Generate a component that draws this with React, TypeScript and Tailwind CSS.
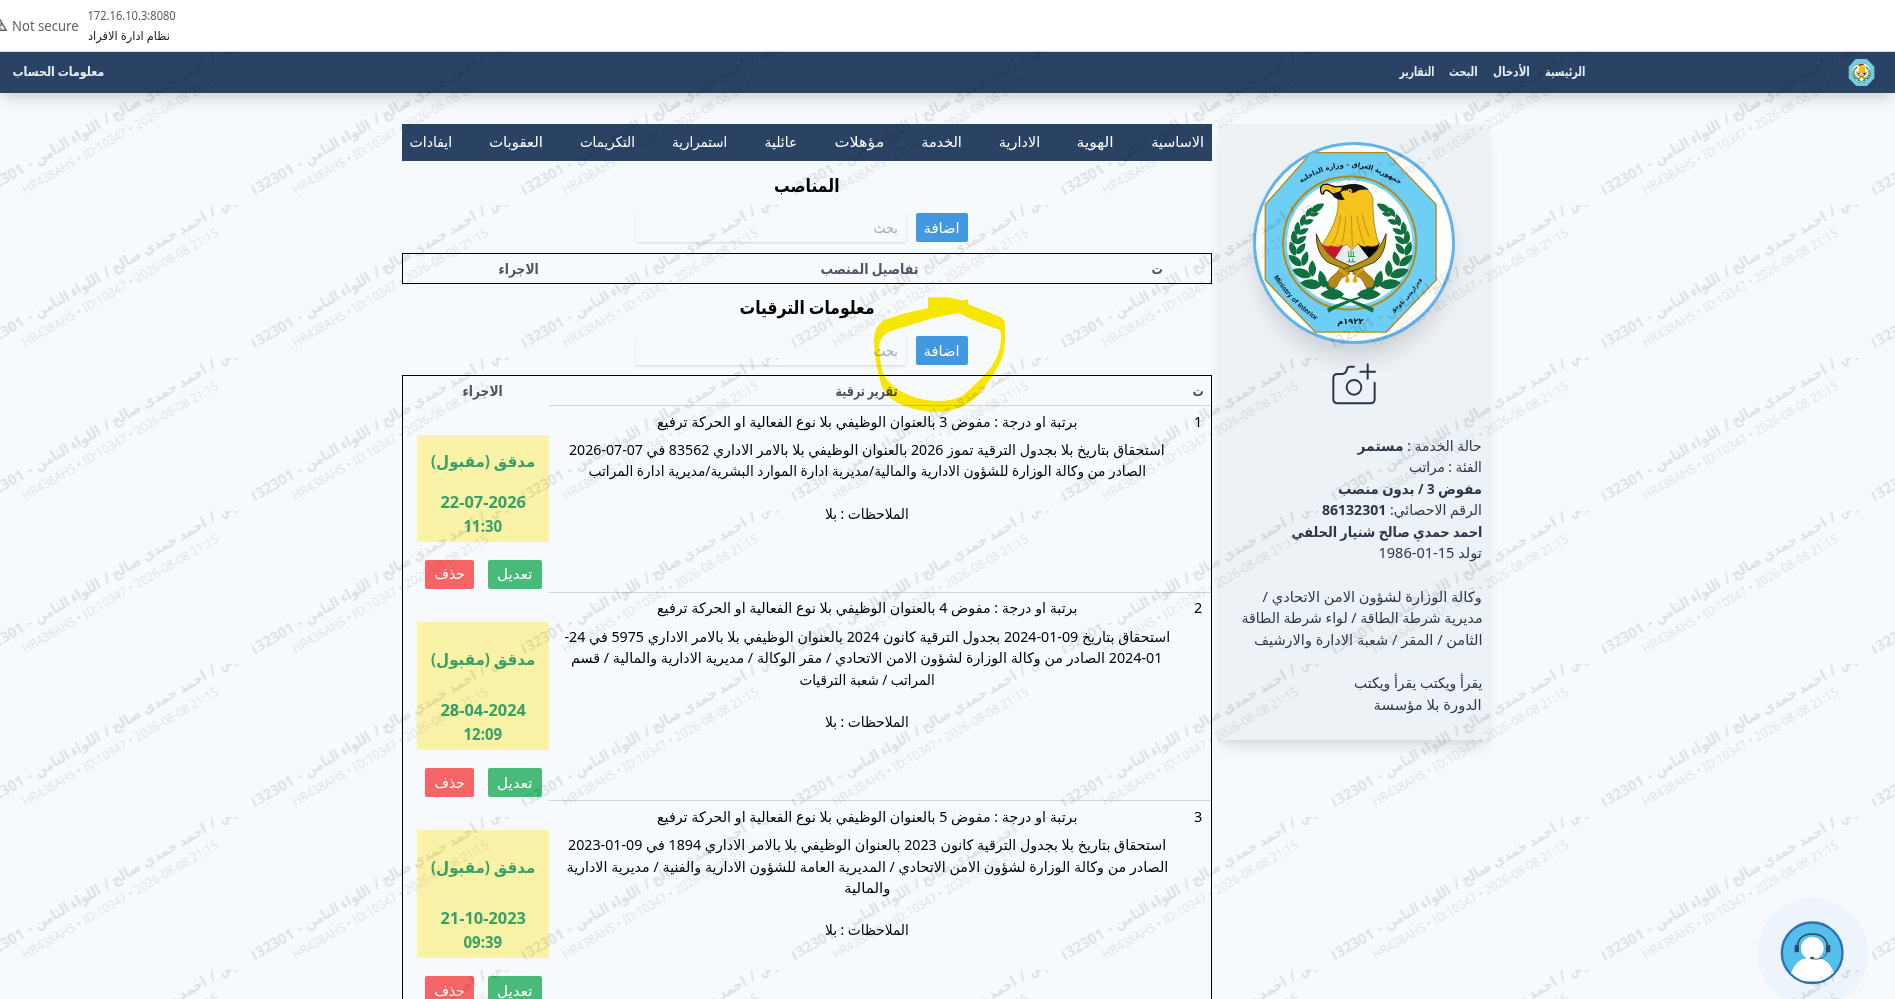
import { useLayoutEffect, useRef, useState, type ReactNode } from "react";

interface FitProps {
  w: number;
  className?: string;
  children: ReactNode;
}

// Single line of text squeezed or stretched to a given width
const Fit = ({ w, className = "", children }: FitProps) => {
  const ref = useRef<HTMLSpanElement>(null);
  const [scale, setScale] = useState(1);

  useLayoutEffect(() => {
    if (ref.current) setScale(w / ref.current.offsetWidth);
  }, [w]);

  return (
    <span className={`flex shrink-0 justify-center ${className}`} style={{ width: w }}>
      <span ref={ref} className="shrink-0 origin-center whitespace-nowrap" style={{ transform: `scaleX(${scale})` }}>
        {children}
      </span>
    </span>
  );
};

const navLinks = [
  { label: "الرئيسية", w: 40 },
  { label: "الأدخال", w: 37 },
  { label: "البحث", w: 29 },
  { label: "التقارير", w: 35 },
];

const tabs = [
  { label: "الاساسية", w: 53 },
  { label: "الهوية", w: 37 },
  { label: "الادارية", w: 41 },
  { label: "الخدمة", w: 41 },
  { label: "مؤهلات", w: 50 },
  { label: "عائلية", w: 33 },
  { label: "استمرارية", w: 55 },
  { label: "التكريمات", w: 55 },
  { label: "العقوبات", w: 54 },
  { label: "ايفادات", w: 43 },
];

const promotions = [
  {
    title: "برتبة او درجة : مفوض 3 بالعنوان الوظيفي بلا نوع الفعالية او الحركة ترفيع",
    lines: [
      { text: "استحقاق بتاريخ بلا بجدول الترقية تموز 2026 بالعنوان الوظيفي بلا بالامر الاداري 83562 في 07-07-2026", w: 596 },
      { text: "الصادر من وكالة الوزارة للشؤون الادارية والمالية/مديرية ادارة الموارد البشرية/مديرية ادارة المراتب", w: 558 },
    ],
    date: "22-07-2026",
    time: "11:30",
  },
  {
    title: "برتبة او درجة : مفوض 4 بالعنوان الوظيفي بلا نوع الفعالية او الحركة ترفيع",
    lines: [
      { text: "استحقاق بتاريخ 09-01-2024 بجدول الترقية كانون 2024 بالعنوان الوظيفي بلا بالامر الاداري 5975 في 24-", w: 606 },
      { text: "2024-01 الصادر من وكالة الوزارة لشؤون الامن الاتحادي / مقر الوكالة / مديرية الادارية والمالية / قسم", w: 591 },
      { text: "المراتب / شعبة الترقيات", w: 135 },
    ],
    date: "28-04-2024",
    time: "12:09",
  },
  {
    title: "برتبة او درجة : مفوض 5 بالعنوان الوظيفي بلا نوع الفعالية او الحركة ترفيع",
    lines: [
      { text: "استحقاق بتاريخ بلا بجدول الترقية كانون 2023 بالعنوان الوظيفي بلا بالامر الاداري 1894 في 09-01-2023", w: 598 },
      { text: "الصادر من وكالة الوزارة لشؤون الامن الاتحادي / المديرية العامة للشؤون الادارية والفنية / مديرية الادارية", w: 602 },
      { text: "والمالية", w: 46 },
    ],
    date: "21-10-2023",
    time: "09:39",
  },
];

// Left half of the wreath: x, y, angle, half length
const leaves = [
  [352, 292, -30, 23],
  [326, 306, -60, 17],
  [342, 312, -12, 15],
  [308, 330, -75, 19],
  [324, 335, -20, 17],
  [291, 354, -85, 20],
  [309, 364, -28, 18],
  [281, 382, -95, 21],
  [302, 390, -35, 20],
  [277, 416, -110, 23],
  [302, 416, -52, 21],
  [284, 452, -140, 26],
  [314, 446, -75, 23],
  [304, 490, -160, 30],
  [336, 476, -90, 25],
  [332, 523, -172, 33],
  [366, 508, -105, 27],
  [396, 554, 180, 36],
  [388, 530, -135, 24],
];

const Wreath = () => (
  <g fill="#10703f">
    {leaves.map(([x, y, r, s], i) => (
      <path key={i} d="M-1 0C-.5 -.65 .4 -.55 1 0C.4 .55 -.5 .65 -1 0Z" transform={`translate(${x} ${y}) rotate(${r}) scale(${s})`} />
    ))}
    <path d="M372 552Q430 556 522 596L519 610Q460 574 372 552Z" />
  </g>
);

const Sword = () => (
  <g>
    <path d="M348 371Q347 430 382 457Q425 477 486 494L494 484Q430 462 398 443Q366 418 348 371Z" fill="#b8901f" stroke="#4d3c0c" strokeWidth="3" />
    <path d="M464 474Q495 484 506 496Q526 510 522 526Q513 540 498 532Q492 518 482 505L458 492Z" fill="#b58a1c" stroke="#7a5c10" strokeWidth="2" />
    <path d="M488 478Q462 494 465 514" fill="none" stroke="#d99f18" strokeWidth="8" strokeLinecap="round" />
    <circle cx="486" cy="480" r="6" fill="#e0a81c" />
    <circle cx="465" cy="512" r="7" fill="#e0a81c" />
  </g>
);

const Emblem = ({ small = false }: { small?: boolean }) => (
  <svg viewBox={small ? "178 124 546 546" : "166 103 592 592"} className="block h-full w-full" fontFamily='"DejaVu Sans", sans-serif'>
    <path d="M333 126H560L710 283V511L560 668H345L194 511V283Z" fill="#6dcff6" stroke="#b88a14" strokeWidth="4" />
    <circle cx="449" cy="399" r="194" fill="#fdfefe" stroke="#72d4f8" strokeWidth="9" />
    <circle cx="449" cy="399" r="201" fill="none" stroke="#b88a14" strokeWidth="6" />
    <Wreath />
    <g transform="translate(903 0) scale(-1 1)">
      <Wreath />
    </g>
    <path d="M372 402L414 410L434 400L405 446Q385 435 366 405Z" fill="#c8142c" />
    <path d="M405 446L432 408L480 408L508 446Q452 480 405 446Z" fill="#e9e9ea" />
    <path d="M474 402L540 398Q534 428 508 446Z" fill="#050505" />
    <path d="M446 440V424M453 439V420M460 438V424M444 440H466M442 456H468M448 456V446M458 456V446" stroke="#189c52" strokeWidth="3" />
    <path
      d="M413 254C418 300 408 338 367 403Q376 413 393 407Q407 414 419 404Q430 412 441 403L456 419L474 401Q490 415 503 407Q520 414 538 402C526 370 519 330 519 267C513 232 480 224 446 224L400 232Q372 222 362 231Q369 245 392 238Q408 240 413 254Z"
      fill="#f5c31c"
      stroke="#856311"
      strokeWidth="2"
    />
    <path d="M421 315Q416 370 397 402M437 320Q434 370 425 400M454 315Q456 375 457 410M471 318Q482 378 493 403M486 310Q495 350 508 380" fill="none" stroke="#a37b10" strokeWidth="2" />
    <path d="M425 229C445 217 485 216 507 238C491 237 474 238 466 246Q452 252 440 240L421 243Q425 258 434 268C414 272 400 264 395 249L398 236Z" fill="#171410" />
    <path d="M364 250C357 232 362 221 380 221L405 229L428 228L424 243L398 252Q384 238 376 240Q370 242 370 251Z" fill="#f5c31c" stroke="#171410" strokeWidth="4" />
    <circle cx="449" cy="242" r="7" fill="#f5c31c" />
    <circle cx="449" cy="242" r="2.5" fill="#171410" />
    <Sword />
    <g transform="translate(907 0) scale(-1 1)">
      <Sword />
    </g>
    {!small && (
      <g fill="#0b1720">
        <path id="arc-top" d="M299 220Q449 116 604 224" fill="none" />
        <path id="arc-left" d="M219 500Q262 574 348 634" fill="none" />
        <path id="arc-right" d="M570 616Q640 566 672 496" fill="none" />
        <text fontSize="20.5" fontWeight="bold" direction="rtl" textAnchor="middle">
          <textPath href="#arc-top" startOffset="50%">جمهورية العراق - وزارة الداخلية</textPath>
        </text>
        <text fontSize="21" fontWeight="bold" direction="ltr" textAnchor="middle" fontFamily='"Liberation Sans", sans-serif'>
          <textPath href="#arc-left" startOffset="50%">Ministry of Interior</textPath>
        </text>
        <text fontSize="17" fontWeight="bold" direction="rtl" textAnchor="middle">
          <textPath href="#arc-right" startOffset="50%">وەزارەتی ناوخۆ</textPath>
        </text>
        <text x="451" y="645" fontSize="25" fontWeight="bold" textAnchor="middle" direction="rtl">
          ١٩٢٢م
        </text>
      </g>
    )}
  </svg>
);

const CameraPlus = () => (
  <svg viewBox="396 759 132 126" className="h-[42px] w-[44px]" fill="none" stroke="#2d3748" strokeWidth="6" strokeLinecap="round" strokeLinejoin="round">
    <path d="M462 770H449Q442 770 441 777Q438 792 425 792H413Q400 792 400 805V867Q400 880 413 880H511Q524 880 524 867V818" />
    <circle cx="462" cy="832" r="22" />
    <path d="M503 763V806M481 785H525" />
  </svg>
);

const SupportAvatar = () => (
  <svg viewBox="112 50 336 336" className="h-[112px] w-[112px]">
    <circle cx="280" cy="218" r="166" fill="#edf4fb" />
    <clipPath id="avatar-clip">
      <circle cx="277.5" cy="217.5" r="88" />
    </clipPath>
    <circle cx="277.5" cy="217.5" r="91" fill="#55bfec" stroke="#2f6fb7" strokeWidth="7" />
    <g clipPath="url(#avatar-clip)">
      <path d="M212 285Q228 236 262 234H294Q328 236 346 285L340 303H216Z" fill="#fff" />
    </g>
    <ellipse cx="278" cy="204" rx="34" ry="34" fill="#fff" />
    <path d="M233 200Q236 161 278 161Q320 161 324 200" fill="none" stroke="#34495e" strokeWidth="5" />
    <path d="M323 214Q316 240 280 236" fill="none" stroke="#34495e" strokeWidth="2.5" />
    <rect x="225" y="194" width="13" height="22" rx="2" fill="#34495e" />
    <rect x="319" y="194" width="13" height="22" rx="2" fill="#34495e" />
    <ellipse cx="277" cy="233" rx="6" ry="4" fill="#34495e" />
  </svg>
);

const markWords = [
  { text: "مفوض", x: 144, w: 36 },
  { text: "/", x: 118, w: 6 },
  { text: "احمد حمدي صالح", x: 56, w: 108 },
  { text: "/", x: -4, w: 6 },
  { text: "اللواء الثامن", x: -49.5, w: 74 },
  { text: "-", x: -93, w: 5 },
  { text: "86132301", x: -134, w: 67 },
];

const Watermark = () => (
  <svg className="pointer-events-none absolute inset-x-0 top-[52px] h-[947px] w-full">
    <pattern id="mark" x="251.7" y="0" width="270" height="153" patternUnits="userSpaceOnUse">
      <g transform="translate(135 76.5) rotate(-30)" fill="#000" fillOpacity="0.1" textAnchor="middle">
        {markWords.map((word) => (
          <text
            key={word.x}
            x={word.x}
            y="-8"
            direction="rtl"
            fontSize="14.8"
            fontWeight="bold"
            fontFamily='"Noto Sans", "DejaVu Sans", sans-serif'
            textLength={word.w}
            lengthAdjust="spacingAndGlyphs"
          >
            {word.text}
          </text>
        ))}
        <text y="11.5" direction="ltr" fontSize="12.6" fontFamily='"Noto Sans", sans-serif' textLength="224" lengthAdjust="spacingAndGlyphs">
          HR438AHS • ID:10347 • 2026-08-08 21:15
        </text>
      </g>
    </pattern>
    <rect width="100%" height="100%" fill="url(#mark)" />
  </svg>
);

// Freehand marker loop around the second add button
const MarkerLoop = () => (
  <svg viewBox="216 555 405 356" className="pointer-events-none absolute left-[872px] top-[295px] h-[119px] w-[135px] mix-blend-multiply">
    <path
      fillRule="evenodd"
      fill="#ffec00"
      d="M384 561H440Q470 565 486 571L504 567V582Q560 603 595 618Q613 622 615 645Q617 690 612 725Q603 765 565 815Q535 862 500 882Q435 916 360 900Q315 892 280 870Q245 845 239 805Q225 760 222 690Q222 650 250 631Q300 610 384 594Z
      M477 609Q440 614 395 625Q330 645 280 660Q245 672 238 700Q236 740 248 785Q258 815 300 842Q350 870 400 872Q455 875 490 855Q540 812 570 775Q600 735 603 690Q605 660 595 657Q560 646 515 627Z"
    />
  </svg>
);

const SearchRow = () => (
  <div className="flex h-[29px] justify-center gap-2.5 pr-[10px]">
    <div className="flex w-[52px] items-center justify-center rounded-[2px] bg-[#4299e1] text-[14.4px] text-white">
      <Fit w={36}>اضافة</Fit>
    </div>
    <div className="flex w-[270px] items-center rounded-[2px] bg-[#f7fafc] px-2 text-[14.4px] text-[#a0aec0] shadow-[0_1px_3px_0_rgba(0,0,0,0.1),0_1px_2px_0_rgba(0,0,0,0.06)]">
      <Fit w={24}>بحث</Fit>
    </div>
  </div>
);

const App = () => {
  return (
    <div
      dir="rtl"
      className="relative h-[999px] w-full overflow-hidden bg-[#f7fafc] text-[14.4px] leading-[21.6px] text-black [font-family:'Noto_Sans','DejaVu_Sans',sans-serif]"
    >
      {/* Browser bar */}
      <div dir="ltr" className="flex h-[52px] border-b border-[#d5d8dc] bg-white">
        <svg viewBox="0 0 8 14" className="mt-[19px] h-[14px] w-[8px] shrink-0" fill="none" stroke="#5f6368" strokeWidth="1.4">
          <path d="M-6 11.3H6.2L0 0.5M1 4V7.5M1 8.8V10" />
        </svg>
        <div className="ml-[4px] mt-[16px] text-[13.5px] text-[#5f6368]">
          <Fit w={67}>Not secure</Fit>
        </div>
        <div className="ml-[9px] mt-[6px] text-[12px] leading-[20px]">
          <Fit w={88} className="text-[#5a5d61]">172.16.10.3:8080</Fit>
          <Fit w={82} className="text-[#202124]">نظام ادارة الافراد</Fit>
        </div>
      </div>

      {/* Main nav */}
      <nav className="relative flex h-[41px] items-start bg-[#2a4365] text-[12.6px] font-bold text-[#e6edf5] shadow-[0_10px_15px_-3px_rgba(0,0,0,0.12),0_4px_6px_-2px_rgba(0,0,0,0.06)]">
        <div className="mr-[20px] mt-[7px] h-[27px] w-[27px]">
          <Emblem small />
        </div>
        <div className="mr-[263px] mt-[9px] flex gap-[15px]">
          {navLinks.map((link) => (
            <Fit key={link.label} w={link.w}>{link.label}</Fit>
          ))}
        </div>
        <div className="ml-[12px] mr-auto mt-[9px]">
          <Fit w={92}>معلومات الحساب</Fit>
        </div>
      </nav>

      <div className="mr-[406px] mt-[31px] flex items-start gap-[7px]">
        {/* Profile card */}
        <aside className="flex h-[616px] w-[270px] flex-col rounded-[4px] bg-[#edf2f7] shadow-[0_10px_15px_-3px_rgba(0,0,0,0.1),0_4px_6px_-2px_rgba(0,0,0,0.05)]">
          <div className="mt-[18px] h-[202px] w-[202px] self-center overflow-hidden rounded-full border-[3px] border-[#63b3ed] bg-white shadow-[0_18px_22px_-5px_rgba(0,0,0,0.14)]">
            <Emblem />
          </div>
          <div className="mt-[19px] self-center">
            <CameraPlus />
          </div>
          <div className="mt-[29.5px] px-[7px] text-[#2d3748]">
            <Fit w={124}>
              حالة الخدمة : <b>مستمر</b>
            </Fit>
            <Fit w={73}>الفئة : مراتب</Fit>
            <Fit w={144} className="font-bold">مفوض 3 / بدون منصب</Fit>
            <Fit w={160}>
              الرقم الاحصائي: <b>86132301</b>
            </Fit>
            <Fit w={191} className="font-bold">احمد حمدي صالح شنيار الحلفي</Fit>
            <Fit w={103}>تولد 15-01-1986</Fit>
            <div className="mt-[21.6px]">
              <Fit w={219}>وكالة الوزارة لشؤون الامن الاتحادي /</Fit>
              <Fit w={241}>مديرية شرطة الطاقة / لواء شرطة الطاقة</Fit>
              <Fit w={228}>الثامن / المقر / شعبة الادارة والارشيف</Fit>
            </div>
            <div className="mt-[21.6px]">
              <Fit w={128}>يقرأ ويكتب يقرأ ويكتب</Fit>
              <Fit w={108}>الدورة بلا مؤسسة</Fit>
            </div>
          </div>
        </aside>

        <main className="flex w-[810px] flex-col">
          <div className="flex h-[37px] items-center justify-between bg-[#2a4365] pb-px pl-[7px] pr-[8px] text-white">
            {tabs.map((tab) => (
              <Fit key={tab.label} w={tab.w}>{tab.label}</Fit>
            ))}
          </div>

          {/* Positions */}
          <h2 className="mt-[11px] flex h-[28px] items-center justify-center text-[18px] font-bold">
            <Fit w={66}>المناصب</Fit>
          </h2>
          <div className="mt-[13px]">
            <SearchRow />
          </div>
          <div className="mt-[11px] flex h-[31px] items-center border border-black font-semibold text-[#4a5568]">
            <div className="flex w-[108px] justify-center">
              <Fit w={11}>ت</Fit>
            </div>
            <div className="flex w-[468px] justify-center">
              <Fit w={98}>تفاصيل المنصب</Fit>
            </div>
            <div className="flex flex-1 justify-center">
              <Fit w={40}>الاجراء</Fit>
            </div>
          </div>

          {/* Promotions */}
          <h2 className="mt-[10px] flex h-[28px] items-center justify-center text-[18px] font-bold">
            <Fit w={135}>معلومات الترقيات</Fit>
          </h2>
          <div className="mt-[14px]">
            <SearchRow />
          </div>
          <div className="mt-[10px] h-[700px] border border-black">
            <div className="flex h-[29px] items-center font-semibold text-[#4a5568]">
              <div className="flex w-[26px] justify-center">
                <Fit w={11}>ت</Fit>
              </div>
              <div className="flex w-[636px] justify-center">
                <Fit w={62}>تقرير ترقية</Fit>
              </div>
              <div className="flex w-[132px] justify-center">
                <Fit w={40}>الاجراء</Fit>
              </div>
            </div>
            {promotions.map((p, i) => (
              <div key={p.date} className="flex">
                <div className="flex w-[662px] border-t border-[#cbd5e0] pt-[4.5px]">
                  <div className="w-[26px] text-center">{i + 1}</div>
                  <div className="flex w-[636px] flex-col items-center pb-[67.5px]">
                    <Fit w={420}>{p.title}</Fit>
                    <div className="mt-[6.8px] flex flex-col items-center">
                      {p.lines.map((line) => (
                        <Fit key={line.text} w={line.w}>{line.text}</Fit>
                      ))}
                    </div>
                    <Fit w={84} className="mt-[20.6px]">الملاحظات : بلا</Fit>
                  </div>
                </div>
                <div className="flex w-[132px] flex-col pt-[30px]">
                  <div className="flex flex-1 flex-col items-center justify-between bg-[#faf3a7] pb-[4px] text-[16.2px] font-bold leading-[24px] text-[#38a169]">
                    <div className="flex flex-1 items-center pb-[2px]">
                      <Fit w={104}>مدقق (مقبول)</Fit>
                    </div>
                    <div dir="ltr" className="flex flex-col items-center">
                      <Fit w={85}>{p.date}</Fit>
                      <Fit w={39}>{p.time}</Fit>
                    </div>
                  </div>
                  <div className="mb-[3px] mt-[18px] flex h-[29px] gap-[14px] pr-[7px] text-white">
                    <div className="flex w-[54px] items-center justify-center rounded-[2px] bg-[#48bb78]">
                      <Fit w={35}>تعديل</Fit>
                    </div>
                    <div className="flex w-[49px] items-center justify-center rounded-[2px] bg-[#f56565]">
                      <Fit w={30}>حذف</Fit>
                    </div>
                  </div>
                </div>
              </div>
            ))}
          </div>
        </main>
      </div>

      <div className="absolute left-[1757px] top-[897px]">
        <SupportAvatar />
      </div>
      <Watermark />
      <MarkerLoop />
    </div>
  );
};

export default App;
